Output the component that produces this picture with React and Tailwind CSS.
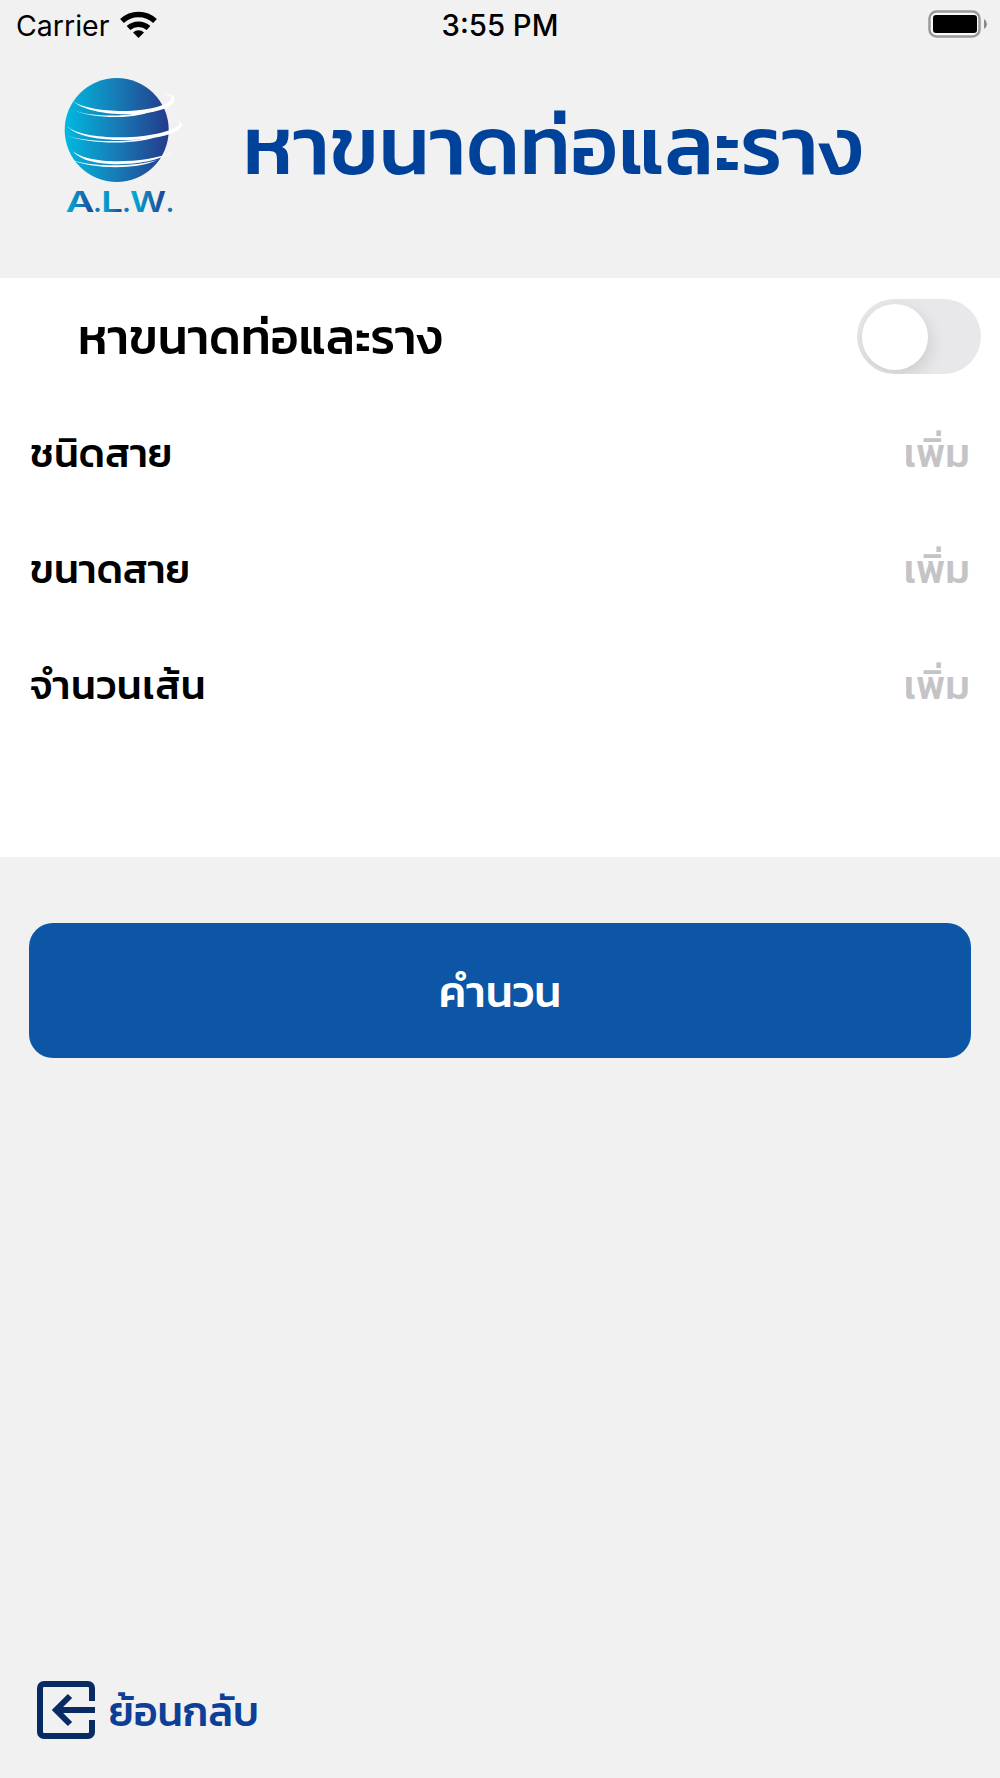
import React, { useState } from "react";

const rows = [
  { label: "ชนิดสาย", spacing: "" },
  { label: "ขนาดสาย", spacing: "" },
  { label: "จำนวนเส้น", spacing: "tracking-[0.6px]" },
];

const Logo = () => (
  <svg width="130" height="160" viewBox="0 0 130 160">
    <defs>
      <linearGradient id="globe" x1="0" y1="0" x2="1" y2="0">
        <stop offset="0" stopColor="#00b9e0" />
        <stop offset="0.5" stopColor="#177bb5" />
        <stop offset="1" stopColor="#243a8c" />
      </linearGradient>
      <linearGradient id="letter" x1="0" y1="0" x2="1" y2="0">
        <stop offset="0" stopColor="#00b4dc" />
        <stop offset="1" stopColor="#233f90" />
      </linearGradient>
    </defs>
    <circle cx="61.700" cy="66" r="52" fill="url(#globe)" />
    {/* Rings */}
    <g fill="#fff">
      <path d="M18 37 C30 47 78 51 105 42 C119 37 121 31 108 30 C121 28 124 38 111 44 C84 55 32 51 18 37Z" />
      <path d="M18 46 C38 54 80 53 101 45 C84 56 38 55 18 46Z" />
      <path d="M12 62 C24 75 83 77 112 67 C127 62 128 58 118 55 C131 58 129 65 115 70 C84 80 24 78 12 62Z" />
      <path d="M10 71 C32 79 80 79 105 71 C84 82 32 80 10 71Z" />
      <path d="M18 87 C32 101 90 100 118 88 C92 104 30 105 18 87Z" />
      <path d="M17 96 C36 103 80 103 102 96 C82 106 36 105 17 96Z" />
    </g>
    <g fontFamily="Inter, Liberation Sans, sans-serif" fontSize="28" fontWeight="600" fill="url(#letter)">
      <text x="10.500" y="148" textLength="29" lengthAdjust="spacingAndGlyphs">A</text>
      <text x="46" y="148" textLength="22" lengthAdjust="spacingAndGlyphs">L</text>
      <text x="75" y="148" textLength="36" lengthAdjust="spacingAndGlyphs">W</text>
      <g fill="#1778b5">
        <text x="38" y="148">.</text>
        <text x="67" y="148">.</text>
        <text x="110.500" y="148">.</text>
      </g>
    </g>
  </svg>
);

const StatusBar = () => (
  <div className="flex h-[51px] items-center justify-between px-4 font-['Inter','Liberation_Sans',sans-serif] text-[28.5px] font-normal text-black">
    <div className="flex w-[300px] items-center gap-[11px]">
      <span className="pt-px">Carrier</span>
      <svg className="-mt-[2px]" width="37" height="27" viewBox="0 0 37 27" fill="none" stroke="#000" strokeWidth="5.5">
        <path d="M2 10 A24 24 0 0 1 35 10" />
        <path d="M8.500 17 A15 15 0 0 1 28.500 17" />
        <path d="M18.500 27 L13 21.500 A8 8 0 0 1 24 21.500Z" fill="#000" stroke="none" />
      </svg>
    </div>
    <span className="pt-px text-[29.3px] font-medium">3:55 PM</span>
    <div className="flex w-[300px] justify-end">
      <svg className="-mr-1 -mt-[3px]" width="60" height="28" viewBox="0 0 60 28">
        <rect x="1.500" y="1.500" width="50" height="25" rx="7" fill="#f8f8f8" stroke="#999" strokeWidth="2.500" />
        <rect x="5" y="5" width="44" height="18" rx="3" />
        <path d="M56 9 Q59 11 59 14 Q59 17 56 19Z" fill="#888" />
      </svg>
    </div>
  </div>
);

const App = () => {
  const [on, setOn] = useState(false);

  return (
    <div className="flex h-[1778px] w-[1000px] flex-col overflow-hidden bg-[#f1f1f1] font-['Kanit','Prompt','Noto_Sans_Thai','Noto_Sans',sans-serif] font-medium">
      <StatusBar />

      {/* Header */}
      <header className="flex h-[227px] items-start pl-[55px] pt-[13px]">
        <Logo />
        <h1 className="ml-[58px] mt-[31px] text-[82.3px] leading-[100px] whitespace-nowrap text-[#00429a]">หาขนาดท่อและราง</h1>
      </header>

      {/* Form */}
      <section className="h-[579px] bg-white text-black">
        <div className="flex h-[117px] items-center justify-between pl-[78px] pr-[19px]">
          <h2 className="text-[48.4px] leading-[60px] whitespace-nowrap">หาขนาดท่อและราง</h2>
          <button onClick={() => setOn(!on)} className="flex h-[75px] w-[124px] items-center overflow-hidden rounded-full bg-[#e8e8ea] px-[5px]">
            <span className="size-[66px] rounded-full bg-white shadow-[2px_6px_18px_rgba(0,0,0,0.12)]" />
          </button>
        </div>
        {rows.map((row) => (
          <div key={row.label} className="flex h-[116px] items-center justify-between pl-[30px] pr-[30px] text-[40.2px] leading-[50px]">
            <span className={row.spacing}>{row.label}</span>
            <span className="text-[#c4c4c6]">เพิ่ม</span>
          </div>
        ))}
      </section>

      <button className="mx-[29px] mt-[66px] h-[135px] rounded-[24px] bg-[#0c56a5] pt-[2px] text-[43.7px] text-white">คำนวน</button>

      {/* Back */}
      <footer className="mt-auto mb-[39px] flex h-[58px] items-center gap-[14px] pl-[37px]">
        <svg width="58" height="58" viewBox="0 0 58 58" fill="none" stroke="#082b64" strokeWidth="6">
          <path d="M55 20V7a4 4 0 0 0-4-4H7a4 4 0 0 0-4 4v44a4 4 0 0 0 4 4h44a4 4 0 0 0 4-4V39" />
          <path d="M58 29H19M33 15L19 29l14 14" />
        </svg>
        <span className="pt-[4px] text-[41px] text-[#0d3f98]">ย้อนกลับ</span>
      </footer>
    </div>
  );
};

export default App;
